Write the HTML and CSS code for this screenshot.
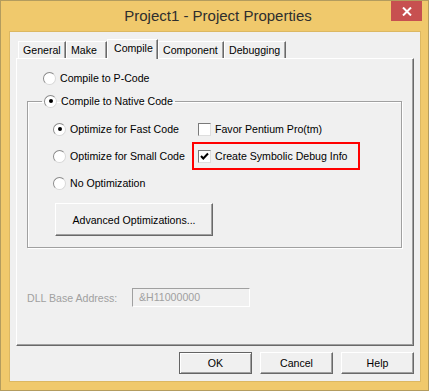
FILE: index.html
```html
<!DOCTYPE html>
<html>
<head>
  <title>Project1 - Project Properties</title>
  <link rel="stylesheet" href="styles.css">
</head>
<body>
  <div class="window">
    <div class="titlebar">
      <span></span>
      <span class="title">Project1 - Project Properties</span>
      <span class="close">
        <svg width="10" height="9" viewBox="0 0 10 9"><path d="M1 0.5 L9 8.5 M9 0.5 L1 8.5" stroke="#fff" stroke-width="2"/></svg>
      </span>
    </div>

    <div class="client">
      <div class="tabs">
        <span class="tab tab-general">General</span>
        <span class="tab tab-make">Make</span>
        <span class="tab tab-compile active">Compile</span>
        <span class="tab tab-component">Component</span>
        <span class="tab tab-debugging">Debugging</span>
      </div>

      <div class="panel">
        <div class="option pcode"><span class="radio"></span>Compile to P-Code</div>

        <fieldset class="group">
          <legend class="option"><span class="radio on"></span>Compile to Native Code</legend>
          <div class="group-grid">
            <div class="option"><span class="radio on"></span>Optimize for Fast Code</div>
            <div class="option"><span class="check"></span>Favor Pentium Pro(tm)</div>
            <div class="option"><span class="radio"></span>Optimize for Small Code</div>
            <div class="option marked"><span class="check on"><svg width="11" height="11" viewBox="0 0 11 11"><path d="M2 5 L4.3 7.5 L9 2.5" fill="none" stroke="#000" stroke-width="2"/></svg></span>Create Symbolic Debug Info</div>
            <div class="option"><span class="radio"></span>No Optimization</div>
          </div>
          <button class="btn adv">Advanced Optimizations...</button>
        </fieldset>

        <div class="dll-row">
          <span class="dll-label">DLL Base Address:</span>
          <span class="dll-box">&amp;H11000000</span>
        </div>
      </div>

      <div class="buttons">
        <button class="btn default">OK</button>
        <button class="btn">Cancel</button>
        <button class="btn">Help</button>
      </div>
    </div>
  </div>
</body>
</html>
```

FILE: styles.css
```css
body {
  margin: 0;
  padding: 0;
  background: #f0c96c;
  font-family: "Liberation Sans", Arial, sans-serif;
  font-size: 10.6px;
  color: #000;
}

.window {
  box-sizing: border-box;
  width: 429px;
  height: 391px;
  background: #f0c96c;
  border: 1px solid #b39c5e;
  padding: 0 7px 8px 8px;
  display: flex;
  flex-direction: column;
}

.titlebar {
  height: 30px;
  display: grid;
  grid-template-columns: 1fr auto 1fr;
  align-items: start;
}

.title {
  font-size: 15px;
  color: #2e2e2e;
  line-height: 30px;
  padding-left: 6px;
}

.close {
  justify-self: end;
  width: 31px;
  height: 20px;
  margin-right: -1px;
  background: #c75050;
  display: flex;
  align-items: center;
  justify-content: center;
}

.client {
  flex: 1;
  background: #f0f0f0;
  border: 1px solid #dcb862;
  display: flex;
  flex-direction: column;
}

/* tab strip */
.tabs {
  display: flex;
  align-items: flex-end;
  height: 26px;
  padding-left: 8px;
  position: relative;
  z-index: 1;
}

.tab {
  box-sizing: border-box;
  height: 17px;
  padding: 2px 0 0 4px;
  border-top: 1px solid #fff;
  border-left: 1px solid #fff;
  border-right: 1px solid #696969;
  box-shadow: inset -1px 0 0 #a0a0a0;
  line-height: 13px;
  white-space: nowrap;
}

.tab-general { width: 48px; }
.tab-make { width: 41px; }
.tab-compile { width: 51px; }
.tab-component { width: 66px; }
.tab-debugging { width: 62px; }

.tab.active {
  height: 20px;
  margin-bottom: -1px;
  padding: 2px 0 0 6px;
  background: #f0f0f0;
}

.panel {
  box-sizing: border-box;
  width: 398px;
  height: 288px;
  margin-left: 6px;
  border-top: 1px solid #fff;
  border-left: 1px solid #fff;
  border-right: 1px solid #696969;
  border-bottom: 1px solid #696969;
  box-shadow: inset -1px -1px 0 #a0a0a0;
  padding: 11px 0 0 10px;
}

/* options */
.option {
  display: flex;
  align-items: center;
  gap: 4px;
  height: 16px;
  white-space: nowrap;
}

.pcode {
  padding-left: 16px;
}

.radio {
  box-sizing: border-box;
  width: 13px;
  height: 13px;
  border-radius: 50%;
  border: 1px solid;
  border-color: #8a8a8a #d8d8d8 #d8d8d8 #8a8a8a;
  background: #fff;
  display: flex;
  align-items: center;
  justify-content: center;
  flex: none;
}

.radio.on::after {
  content: "";
  width: 4px;
  height: 4px;
  border-radius: 50%;
  background: #000;
}

.check {
  box-sizing: border-box;
  width: 13px;
  height: 13px;
  border: 1px solid;
  border-color: #7a7a7a #dedede #dedede #7a7a7a;
  background: #fff;
  display: flex;
  align-items: center;
  justify-content: center;
  flex: none;
}

.marked {
  width: 156px;
  outline: 2px solid #f00;
  outline-offset: 4px;
}

/* group box */
.group {
  box-sizing: border-box;
  width: 375px;
  height: 154px;
  margin: 8px 0 0 0;
  padding: 0 0 0 25px;
  border: 1px solid #a0a0a0;
  box-shadow: inset 1px 1px 0 #fff, 1px 1px 0 #fff;
}

.group legend {
  margin-left: -11px;
  padding: 0 2px;
  height: 14px;
}

.group-grid {
  display: grid;
  grid-template-columns: 145px auto;
  row-gap: 11px;
  margin-top: 13px;
}

/* buttons */
.btn {
  font-family: "Liberation Sans", Arial, sans-serif;
  font-size: 10.6px;
  color: #000;
  background: #f0f0f0;
  border: 1px solid;
  border-color: #fff #696969 #696969 #fff;
  box-shadow: inset -1px -1px 0 #a0a0a0;
  padding: 0;
  margin: 0;
}

.adv {
  display: block;
  width: 158px;
  height: 33px;
  margin: 12px 0 0 2px;
}

.dll-row {
  display: flex;
  align-items: center;
  margin-top: 40px;
  color: #a0a0a0;
}

.dll-label {
  width: 105px;
}

.dll-box {
  box-sizing: border-box;
  width: 118px;
  height: 19px;
  padding-left: 6px;
  line-height: 17px;
  border: 1px solid;
  border-color: #a0a0a0 #fff #fff #a0a0a0;
  color: #a0a0a0;
}

.buttons {
  display: flex;
  justify-content: flex-end;
  gap: 8px;
  padding: 6px 6px 0 0;
}

.buttons .btn {
  width: 73px;
  height: 22px;
}

.btn.default {
  border: 1px solid #646464;
  box-shadow: inset 1px 1px 0 #fff, inset -1px -1px 0 #a0a0a0;
}
```
